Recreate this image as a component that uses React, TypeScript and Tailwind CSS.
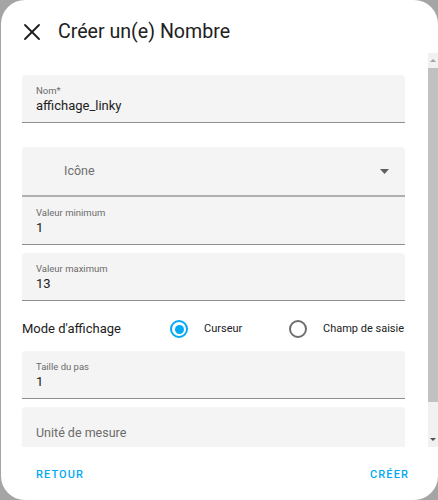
import { X } from 'lucide-react';

function Field({ label, value, rounded = true }: { label: string; value: string; rounded?: boolean }) {
  return (
    <div
      className={`h-[48px] bg-[#f4f4f4] border-b border-[#8f8f8f] pl-[14px] pt-[9px] flex flex-col ${rounded ? 'rounded-t-[4px]' : ''}`}
    >
      <span className="text-[9.5px] leading-[13px] text-[#6b6b6b]">{label}</span>
      <span className="text-[13px] leading-[16px] mt-[1px] text-[#212121]">{value}</span>
    </div>
  );
}

function Radio({ checked, label }: { checked: boolean; label: string }) {
  return (
    <div className="flex items-center">
      <div
        className={`w-[18px] h-[18px] rounded-full border-2 flex items-center justify-center ${checked ? 'border-[#03a9f4]' : 'border-[#6e6e6e]'}`}
      >
        {checked && <div className="w-[9px] h-[9px] rounded-full bg-[#03a9f4]" />}
      </div>
      <span className="ml-[16px] text-[11px] whitespace-nowrap text-[#212121]">{label}</span>
    </div>
  );
}

export default function App() {
  return (
    <div className="w-[438px] h-[500px] bg-[#a5a5a5] pl-[1px]" style={{ fontFamily: 'Roboto, "Liberation Sans", sans-serif' }}>
      <div className="w-[437px] h-[500px] bg-white rounded-[24px] flex flex-col overflow-hidden">
        {/* header */}
        <div className="h-[53px] flex items-center pl-[17px] pt-[10px] shrink-0">
          <X className="w-[28px] h-[28px] text-[#212121]" strokeWidth={1.6} />
          <h1 className="ml-[12px] text-[19.6px] text-[#212121] leading-none">Créer un(e) Nombre</h1>
        </div>

        {/* scroll area */}
        <div className="h-[394px] flex shrink-0">
          <div className="flex-1 overflow-hidden pl-[21px] pr-[23px] pt-[22px]">
            <Field label="Nom*" value="affichage_linky" />

            <div className="mt-[24px] h-[50px] bg-[#f4f4f4] rounded-t-[4px] border-b-2 border-[#b0b0b0] flex items-center pl-[42px] pr-[16px]">
              <span className="flex-1 text-[12.5px] text-[#6f6f6f]">Icône</span>
              <svg width="9" height="5" viewBox="0 0 9 5">
                <path d="M0 0 L9 0 L4.5 5 Z" fill="#5f5f5f" />
              </svg>
            </div>

            <Field label="Valeur minimum" value="1" rounded={false} />

            <div className="mt-[8px]">
              <Field label="Valeur maximum" value="13" />
            </div>

            <div className="h-[50px] flex items-center pt-[6px]">
              <span className="w-[148px] text-[13px] text-[#212121]">Mode d'affichage</span>
              <div className="w-[119px]">
                <Radio checked label="Curseur" />
              </div>
              <Radio checked={false} label="Champ de saisie" />
            </div>

            <Field label="Taille du pas" value="1" />

            <div className="mt-[8px] h-[48px] bg-[#f4f4f4] rounded-t-[4px] pl-[14px] pt-[13px]">
              <span className="text-[12.5px] text-[#6b6b6b]">Unité de mesure</span>
            </div>
          </div>

          {/* scrollbar */}
          <div className="w-[10px] bg-[#f1f1f1] flex flex-col">
            <div className="h-[15px] flex items-center justify-center">
              <svg width="6" height="3" viewBox="0 0 6 3">
                <path d="M0 3 L6 3 L3 0 Z" fill="#a3a3a3" />
              </svg>
            </div>
            <div className="h-[334px] bg-[#c1c1c1]" />
            <div className="flex-1 flex items-end justify-center pb-[6px]">
              <svg width="6" height="3" viewBox="0 0 6 3">
                <path d="M0 0 L6 0 L3 3 Z" fill="#505050" />
              </svg>
            </div>
          </div>
        </div>

        {/* footer */}
        <div className="flex-1 flex items-center justify-between pl-[35px] pr-[29px] pt-[4px]">
          <button className="text-[11px] font-medium tracking-[0.1em] text-[#03a9f4]">RETOUR</button>
          <button className="text-[11px] font-medium tracking-[0.1em] text-[#03a9f4]">CRÉER</button>
        </div>
      </div>
    </div>
  );
}
